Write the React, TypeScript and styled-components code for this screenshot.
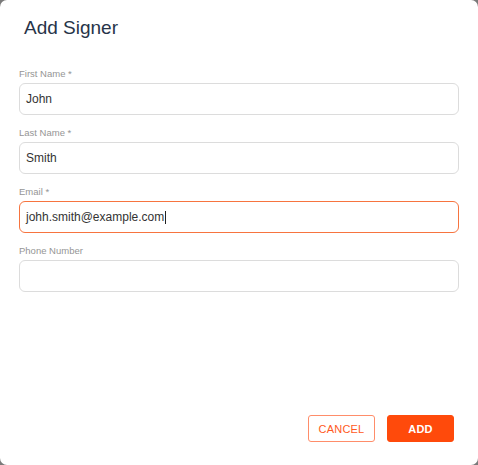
import styled, { createGlobalStyle } from 'styled-components'

const GlobalStyle = createGlobalStyle`
  html, body {
    margin: 0;
    padding: 0;
    background: #7a7a7a;
  }
  * { box-sizing: border-box; }
`

const Dialog = styled.div`
  height: 465px;
  width: 478px;
  background: #fff;
  border-radius: 7px;
  display: flex;
  flex-direction: column;
  padding: 16px 19px 23px 19px;
`

const Title = styled.h2`
  margin: 0 0 28px 5px;
  font-family: 'Liberation Sans', Arial, sans-serif;
  font-size: 19px;
  line-height: 24px;
  font-weight: 400;
  color: #273449;
`

const Form = styled.div`
  display: flex;
  flex-direction: column;
  gap: 12px;
`

const Group = styled.div`
  display: flex;
  flex-direction: column;
`

const Label = styled.label`
  font-family: 'Liberation Sans', Arial, sans-serif;
  font-size: 9.5px;
  line-height: 12px;
  color: #959595;
  margin-bottom: 3px;
`

const Box = styled.div<{ $active?: boolean }>`
  height: 32px;
  border: 1px solid ${(p) => (p.$active ? '#f7743f' : '#dcdcdc')};
  border-radius: 6px;
  padding: 0 6px;
  display: flex;
  align-items: center;
  font-family: 'Liberation Sans', Arial, sans-serif;
  font-size: 12px;
  color: #333;
`

const Caret = styled.span`
  display: inline-block;
  width: 1px;
  height: 13px;
  background: #222;
  margin-left: 1px;
`

const Footer = styled.div`
  margin-top: auto;
  display: flex;
  justify-content: flex-end;
  gap: 12px;
  padding-right: 5px;
`

const Button = styled.button<{ $primary?: boolean }>`
  width: 67px;
  height: 27px;
  border-radius: 3px;
  font-family: 'Liberation Sans', Arial, sans-serif;
  font-size: 11px;
  letter-spacing: 0.2px;
  cursor: pointer;
  border: 1px solid ${(p) => (p.$primary ? '#ff4a0b' : '#ff8d6a')};
  background: ${(p) => (p.$primary ? '#ff4a0b' : '#fff')};
  color: ${(p) => (p.$primary ? '#fff' : '#ff5a22')};
  font-weight: ${(p) => (p.$primary ? 700 : 400)};
`

const fields = [
  { label: 'First Name *', value: 'John' },
  { label: 'Last Name *', value: 'Smith' },
  { label: 'Email *', value: 'johh.smith@example.com', active: true },
  { label: 'Phone Number', value: '' },
]

export default function App() {
  return (
    <>
      <GlobalStyle />
      <Dialog>
        <Title>Add Signer</Title>
        <Form>
          {fields.map((f) => (
            <Group key={f.label}>
              <Label>{f.label}</Label>
              <Box $active={f.active}>
                {f.value}
                {f.active && <Caret />}
              </Box>
            </Group>
          ))}
        </Form>
        <Footer>
          <Button>CANCEL</Button>
          <Button $primary>ADD</Button>
        </Footer>
      </Dialog>
    </>
  )
}
